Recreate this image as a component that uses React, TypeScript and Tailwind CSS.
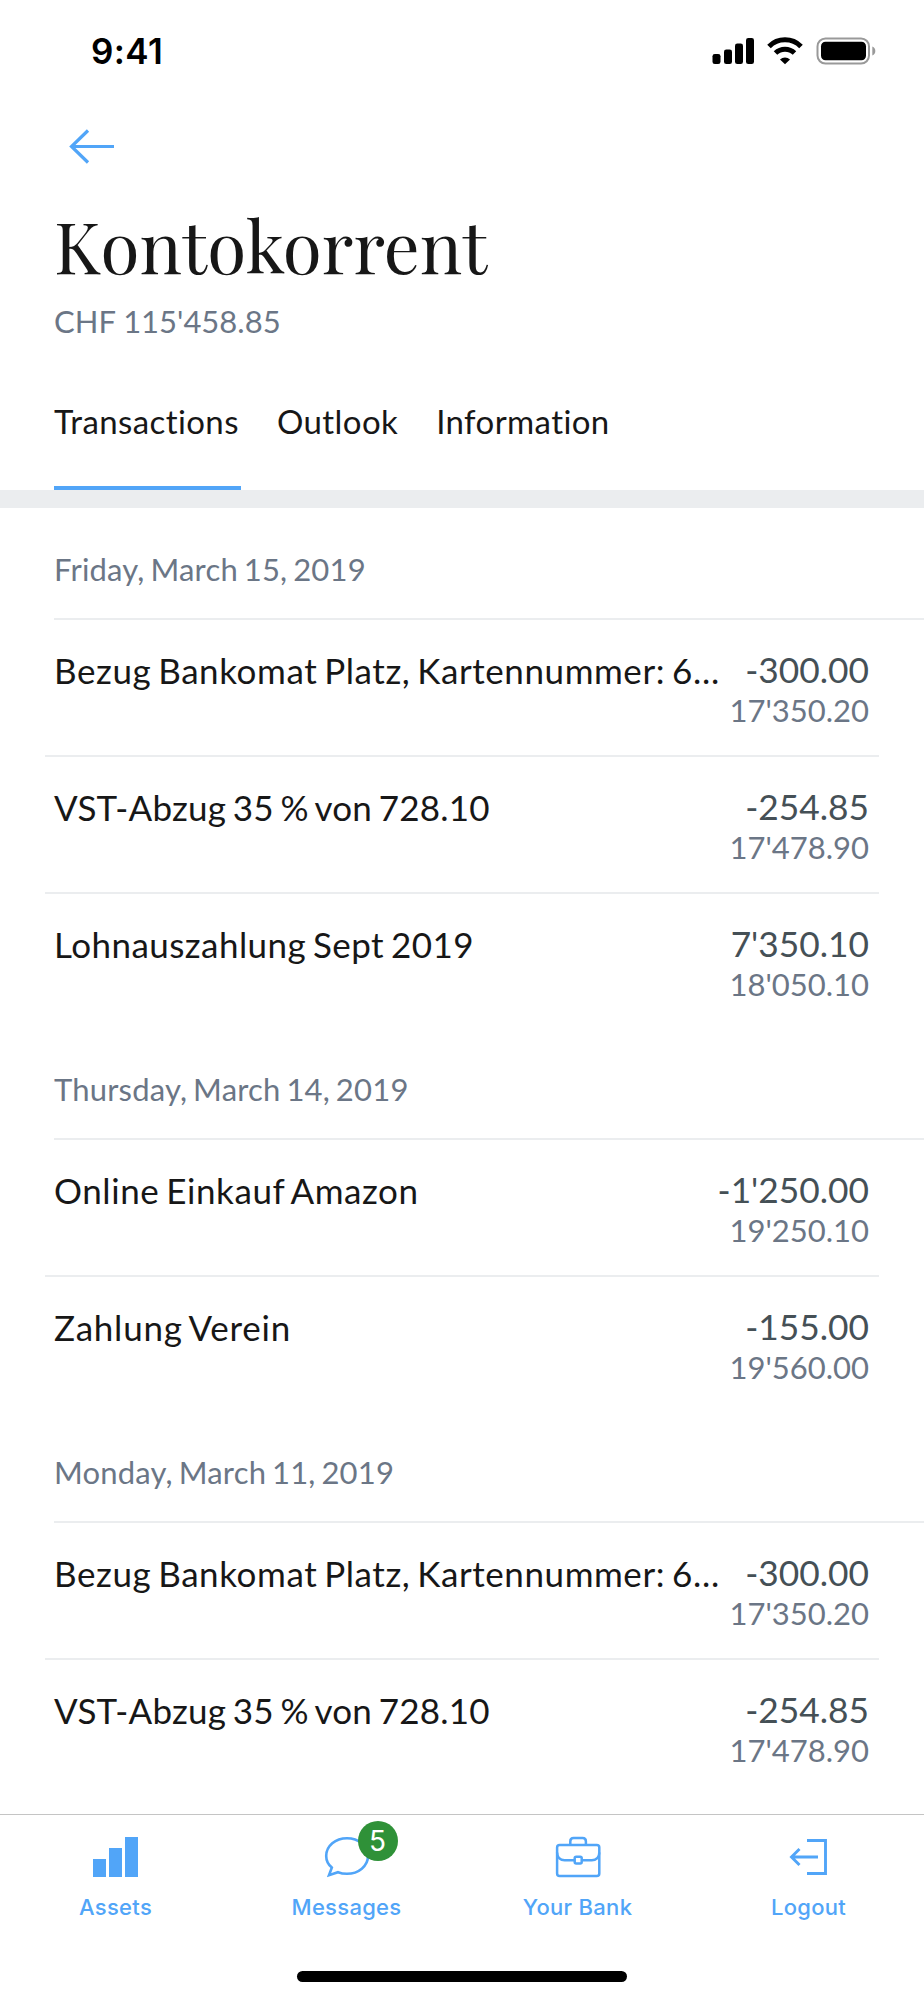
import React from "react";

const groups = [
  {
    date: "Friday, March 15, 2019",
    items: [
      {
        title: "Bezug Bankomat Platz, Kartennummer: 6…",
        tracking: "tracking-[0.58px]",
        amount: "-300.00",
        balance: "17'350.20",
      },
      {
        title: "VST-Abzug 35 % von 728.10",
        tracking: "tracking-[0.23px]",
        amount: "-254.85",
        balance: "17'478.90",
      },
      {
        title: "Lohnauszahlung Sept 2019",
        tracking: "tracking-[0.45px]",
        amount: "7'350.10",
        balance: "18'050.10",
      },
    ],
  },
  {
    date: "Thursday, March 14, 2019",
    items: [
      {
        title: "Online Einkauf Amazon",
        tracking: "tracking-[0.58px]",
        amount: "-1'250.00",
        balance: "19'250.10",
      },
      {
        title: "Zahlung Verein",
        tracking: "tracking-[0.75px]",
        amount: "-155.00",
        balance: "19'560.00",
      },
    ],
  },
  {
    date: "Monday, March 11, 2019",
    items: [
      {
        title: "Bezug Bankomat Platz, Kartennummer: 6…",
        tracking: "tracking-[0.58px]",
        amount: "-300.00",
        balance: "17'350.20",
      },
      {
        title: "VST-Abzug 35 % von 728.10",
        tracking: "tracking-[0.23px]",
        amount: "-254.85",
        balance: "17'478.90",
      },
    ],
  },
];

const StatusBar = () => {
  return (
    <div className="flex h-[102px] items-center justify-between pr-[48px] pl-[91px] text-black">
      <span className="font-['Inter'] text-[35px] leading-none font-semibold tracking-[0.4px]">
        9:41
      </span>
      <svg width="164" height="28" viewBox="0 0 164 28">
        <rect x="0.5" y="17" width="8" height="10" rx="2.3" />
        <rect x="12" y="12.5" width="8" height="14.5" rx="2.3" />
        <rect x="23" y="6.5" width="8" height="20.5" rx="2.3" />
        <rect x="34" y="1" width="8" height="26" rx="2.3" />
        <g fill="none" stroke="#000" strokeWidth="5">
          <path d="M57 9.5a22.5 22.5 0 0 1 32 0" />
          <path d="M63.5 16a13.6 13.6 0 0 1 19 0" />
        </g>
        <path d="M73 27.3l-5-4.9a7.2 7.2 0 0 1 10 0z" />
        <rect
          x="105.5"
          y="1.4"
          width="51.5"
          height="25.2"
          rx="8"
          fill="none"
          stroke="#999"
          strokeWidth="2"
        />
        <rect x="109" y="4.8" width="45" height="18.5" rx="4.5" />
        <path d="M160.3 9.5c4 1.5 4 7.5 0 9z" fill="#999" />
      </svg>
    </div>
  );
};

const AssetsIcon = () => (
  <svg width="46" height="42" viewBox="0 0 46 42" fill="#51a5f8">
    <path d="M0 23h13v18H0zM16 12h13v29H16zM32 1h13v40H32z" />
  </svg>
);

const MessagesIcon = () => (
  <svg
    width="46"
    height="42"
    viewBox="0 0 46 42"
    fill="none"
    stroke="#51a5f8"
    strokeWidth="2.6"
  >
    <path d="M7.8 31.6C3.8 28.2 2.2 24.2 2.2 20C2.2 10 11.5 2.2 23 2.2S44 10 44 20S34.5 37.8 23 37.8C19.5 37.8 16.5 37.2 14 36.2L5 39.2Z" />
  </svg>
);

const BankIcon = () => (
  <svg
    width="46"
    height="42"
    viewBox="0 0 46 42"
    fill="none"
    stroke="#51a5f8"
    strokeWidth="2.5"
  >
    <rect x="2.1" y="9" width="42.2" height="31" rx="2.5" />
    <path d="M15.3 9V5.5c0-2 1.3-3.4 3.3-3.4h9c2 0 3.3 1.4 3.3 3.4V9" />
    <path d="M2.1 16.5c0 5 3.5 7.7 7.5 7.7h9.6M27.2 24.2h9.6c4 0 7.5-2.7 7.5-7.7" />
    <rect x="19.7" y="20.7" width="7" height="6.8" rx="1.5" />
  </svg>
);

const LogoutIcon = () => (
  <svg
    width="46"
    height="42"
    viewBox="0 0 46 42"
    fill="none"
    stroke="#51a5f8"
    strokeWidth="2.9"
  >
    <path d="M21 4.5h18.5v33H21M32 21H5.5M13.5 13l-8 8l8 8" />
  </svg>
);

const tabs = [
  { label: "Assets", icon: <AssetsIcon /> },
  { label: "Messages", icon: <MessagesIcon />, badge: 5 },
  { label: "Your Bank", icon: <BankIcon /> },
  { label: "Logout", icon: <LogoutIcon /> },
];

const App = () => {
  return (
    <div className="flex h-[2000px] w-[924px] flex-col overflow-hidden bg-white font-['Lato',sans-serif] text-[#171717]">
      <StatusBar />

      <header className="flex h-[388px] flex-col pl-[54px]">
        <svg
          className="mt-[27px] ml-[13px]"
          width="48"
          height="36"
          viewBox="0 0 48 36"
          fill="none"
          stroke="#51a5f8"
          strokeWidth="3.2"
        >
          <path d="M47 17.5H4.5M21 1.5L4.5 17.5l16.5 16" />
        </svg>
        <h1 className="mt-[36px] font-['Playfair_Display','Liberation_Serif',serif] text-[71px] leading-[88px] tracking-[0.1px]">
          Kontokorrent
        </h1>
        <p className="mt-[12px] text-[31px] leading-[40px] text-[#6b7686]">
          CHF 115'458.85
        </p>
        <nav className="mt-auto flex text-[33px] leading-[38px] tracking-[0.4px]">
          <div className="h-[88px] w-[187px] border-b-4 border-[#51a5f8]">
            Transactions
          </div>
          <div className="ml-[36px]">Outlook</div>
          <div className="ml-[38px]">Information</div>
        </nav>
      </header>
      <div className="h-[18px] shrink-0 bg-[#ebedef]" />

      <main className="min-h-0 flex-1 overflow-hidden pt-[3px]">
        {groups.map((group) => (
          <section key={group.date}>
            <h2 className="ml-[54px] h-[109px] border-b-2 border-[#ebedef] pt-[38px] text-[31px] leading-[40px] tracking-[0.2px] text-[#6b7686] [word-spacing:-2.3px]">
              {group.date}
            </h2>
            <ul className="mx-[45px] divide-y-2 divide-[#ebedef]">
              {group.items.map((item) => (
                <li
                  key={item.title}
                  className="flex h-[137px] items-start justify-between pt-[28px] pr-[10px] pl-[9px]"
                >
                  <span
                    className={`text-[35px] leading-[44px] whitespace-nowrap [word-spacing:-2.6px] ${item.tracking}`}
                  >
                    {item.title}
                  </span>
                  <div className="text-right">
                    <div className="text-[35.3px] leading-[44px] text-[#455056]">
                      {item.amount}
                    </div>
                    <div className="text-[31px] leading-[37px] text-[#6b7686]">
                      {item.balance}
                    </div>
                  </div>
                </li>
              ))}
            </ul>
          </section>
        ))}
      </main>

      <footer className="flex h-[186px] shrink-0 flex-col items-center border-t border-[#c4c4c4] bg-white">
        <div className="grid w-full grid-cols-4">
          {tabs.map((tab) => (
            <div key={tab.label} className="flex flex-col items-center pt-[21px]">
              <div className="relative">
                {tab.icon}
                {tab.badge && (
                  <span className="absolute -top-[15px] left-[34px] flex size-[40px] items-center justify-center rounded-full bg-[#2f9138] font-['Inter'] text-[28px] text-white">
                    {tab.badge}
                  </span>
                )}
              </div>
              <span className="mt-[15px] font-['Inter'] text-[22px] leading-[28px] font-medium tracking-[0.3px] text-[#51a5f8]">
                {tab.label}
              </span>
            </div>
          ))}
        </div>
        <div className="mt-auto mb-[18px] h-[11px] w-[330px] rounded-full bg-black" />
      </footer>
    </div>
  );
};

export default App;
